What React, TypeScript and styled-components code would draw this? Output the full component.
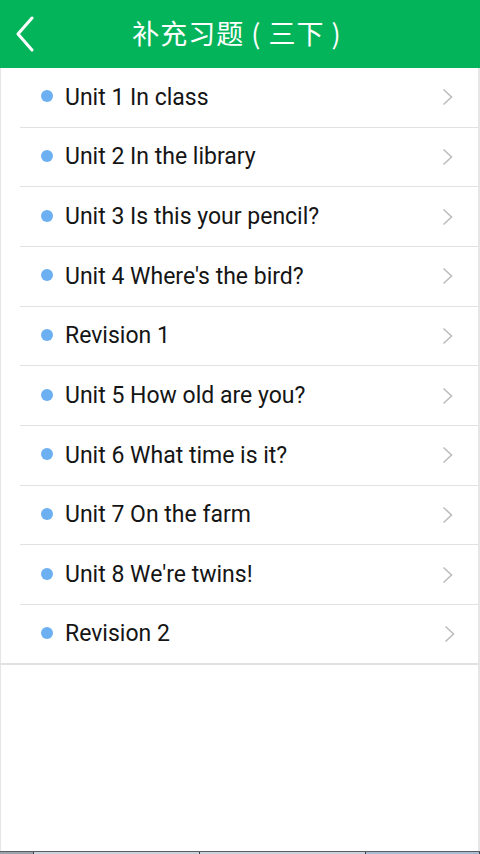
import React from "react";
import styled, { createGlobalStyle } from "styled-components";

const Global = createGlobalStyle`
  html, body { margin: 0; padding: 0; background: #ffffff; }
  body { font-family: Roboto, "Noto Sans CJK SC", sans-serif; }
  * { box-sizing: border-box; }
`;

const Page = styled.div`
  width: 480px;
  height: 854px;
  display: flex;
  flex-direction: column;
  background: #ffffff;
  overflow: hidden;
`;

const Frame = styled.div`
  flex: 1;
  display: flex;
  flex-direction: column;
  border-left: 1px solid #e6e6e6;
  border-right: 2px solid #e6e6e6;
`;

const Header = styled.header`
  height: 68px;
  background: #04b45a;
  display: flex;
  align-items: center;
  justify-content: center;
  position: relative;
  margin: 0 -2px 0 -1px;
`;

const Back = styled.button`
  position: absolute;
  left: 10px;
  top: 14px;
  width: 30px;
  height: 40px;
  border: 0;
  background: transparent;
  padding: 0;
  display: flex;
  align-items: center;
  justify-content: center;
`;

const Title = styled.h1`
  margin: 0 0 3px 0;
  font-family: "Noto Sans CJK SC", sans-serif;
  font-weight: 400;
  font-size: 27px;
  color: #ffffff;
  letter-spacing: 1px;
  padding-right: 6px;
  white-space: pre;
`;

const List = styled.ul`
  list-style: none;
  margin: 0;
  padding: 0;
`;

const Row = styled.li<{ $last?: boolean }>`
  height: 59.67px;
  display: flex;
  align-items: center;
  margin-left: ${(p) => (p.$last ? "-1px" : "19px")};
  padding-left: ${(p) => (p.$last ? "41px" : "21px")};
  padding-right: 25px;
  border-bottom: ${(p) => (p.$last ? "2px" : "1px")} solid #e2e2e2;
  margin-right: ${(p) => (p.$last ? "-2px" : "0")};
`;

const Dot = styled.span`
  width: 12px;
  height: 12px;
  border-radius: 50%;
  background: #6cb0f2;
  flex: none;
  margin-right: 12px;
  margin-top: -2px;
`;

const Label = styled.span`
  flex: 1;
  font-family: Roboto, sans-serif;
  font-size: 23px;
  color: #151515;
`;

const Chevron = styled.svg`
  flex: none;
`;

const BottomStrip = styled.div`
  height: 3px;
  display: flex;
  border-top: 1px solid #5a5d62;
`;

const Seg = styled.div<{ $c: string; $w: number }>`
  width: ${(p) => p.$w}px;
  background: ${(p) => p.$c};
  border-right: 1px solid #3f4246;
`;

const items = [
  "Unit 1 In class",
  "Unit 2 In the library",
  "Unit 3 Is this your pencil?",
  "Unit 4 Where's the bird?",
  "Revision 1",
  "Unit 5 How old are you?",
  "Unit 6 What time is it?",
  "Unit 7 On the farm",
  "Unit 8 We're twins!",
  "Revision 2",
];

export default function App() {
  return (
    <Page>
      <Global />
      <Frame>
        <Header>
          <Back aria-label="back">
            <svg width="22" height="36" viewBox="0 0 22 36">
              <polyline
                points="18,2 4,18 18,34"
                fill="none"
                stroke="#ffffff"
                strokeWidth="3"
                strokeLinecap="round"
                strokeLinejoin="round"
              />
            </svg>
          </Back>
          <Title>{"补充习题 ( 三下 )"}</Title>
        </Header>
        <List>
          {items.map((t, i) => (
            <Row key={t} $last={i === items.length - 1}>
              <Dot />
              <Label>{t}</Label>
              <Chevron width="11" height="18" viewBox="0 0 11 18">
                <polyline
                  points="1.5,1.5 9.5,9 1.5,16.5"
                  fill="none"
                  stroke="#bdbdbd"
                  strokeWidth="1.6"
                />
              </Chevron>
            </Row>
          ))}
        </List>
      </Frame>
      <BottomStrip>
        <Seg $c="#9aa3ad" $w={34} />
        <Seg $c="#c9d3de" $w={166} />
        <Seg $c="#c9d3de" $w={166} />
        <Seg $c="#a9bcd3" $w={114} />
      </BottomStrip>
    </Page>
  );
}
